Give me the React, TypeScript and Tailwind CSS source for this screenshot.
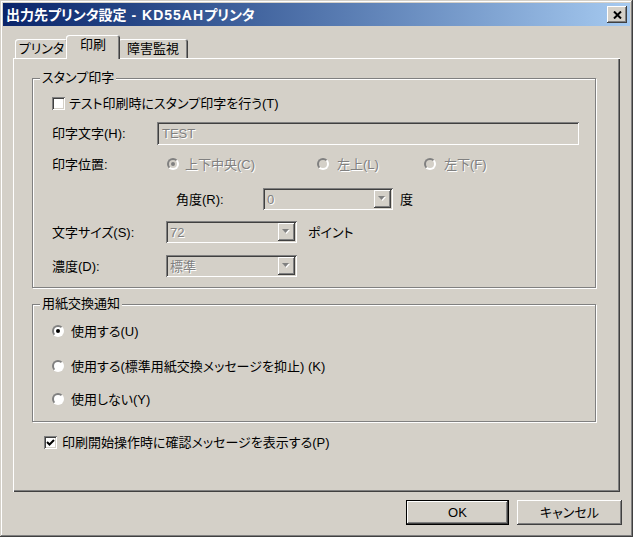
import type { ReactNode } from "react";

const raised =
  "shadow-[inset_-1px_-1px_0_#404040,inset_1px_1px_0_#fff,inset_-2px_-2px_0_#808080,inset_2px_2px_0_#d4d0c8]";
const sunken =
  "shadow-[inset_1px_1px_0_#808080,inset_-1px_-1px_0_#fff,inset_2px_2px_0_#404040,inset_-2px_-2px_0_#d4d0c8]";
const disabledText = "text-[#808080] [text-shadow:1px_1px_0_#fff]";

function Check({ checked }: { checked?: boolean }) {
  return (
    <span className={`flex h-[13px] w-[13px] shrink-0 items-center justify-center bg-white ${sunken}`}>
      {checked && (
        <svg width="13" height="13" viewBox="0 0 13 13">
          <polyline points="3,6 5.5,8.5 10,4" fill="none" stroke="#000" strokeWidth="2" />
        </svg>
      )}
    </span>
  );
}

function Radio({ checked, disabled }: { checked?: boolean; disabled?: boolean }) {
  return (
    <span
      className={`flex h-[12px] w-[12px] shrink-0 items-center justify-center rounded-full border-2 border-t-[#808080] border-l-[#808080] border-r-white border-b-white ${
        disabled ? "bg-[#d4d0c8]" : "bg-white"
      }`}
    >
      {checked && (
        <span className={`h-[4px] w-[4px] rounded-full ${disabled ? "bg-[#808080]" : "bg-black"}`} />
      )}
    </span>
  );
}

function Combo({ value, className }: { value: string; className: string }) {
  return (
    <div className={`flex h-[22px] items-center bg-[#d4d0c8] p-[2px] ${sunken} ${className}`}>
      <span className={`flex-1 pl-[2px] ${disabledText}`}>{value}</span>
      <span className={`flex h-[18px] w-[17px] items-center justify-center bg-[#d4d0c8] ${raised}`}>
        <svg width="9" height="6" viewBox="0 0 9 6">
          <polygon points="1,1 8,1 4.5,5" fill="#fff" />
          <polygon points="0,0 7,0 3.5,4" fill="#808080" />
        </svg>
      </span>
    </div>
  );
}

function Group({ title, className, children }: { title: string; className: string; children: ReactNode }) {
  return (
    <fieldset
      className={`border border-[#808080] px-[7px] shadow-[inset_1px_1px_0_#fff,1px_1px_0_#fff] ${className}`}
    >
      <legend className="bg-[#d4d0c8] px-[2px] leading-[14px]">{title}</legend>
      <div className="flex flex-col pl-[12px]">{children}</div>
    </fieldset>
  );
}

export default function App() {
  return (
    <div className="h-[539px] w-[635px] bg-white text-[13px] leading-none text-black [font-family:'Liberation_Sans','Noto_Sans_CJK_JP',sans-serif] [font-feature-settings:'palt']">
      <div className="flex h-[537px] w-[633px] flex-col bg-[#d4d0c8] p-[3px] shadow-[inset_-1px_-1px_0_#404040,inset_1px_1px_0_#d4d0c8,inset_-2px_-2px_0_#808080,inset_2px_2px_0_#fff]">
        {/* title bar */}
        <div className="flex h-[23px] items-center justify-between bg-gradient-to-r from-[#0a246a] to-[#a6caf0] pl-[3px] pr-[3px]">
          <span className="text-[14px] font-bold text-white">
            出力先プリンタ設定<span className="tracking-[1px]"> - KD55AH</span>プリンタ
          </span>
          <span className={`flex h-[17px] w-[20px] items-center justify-center bg-[#d4d0c8] ${raised}`}>
            <svg width="9" height="8" viewBox="0 0 9 8">
              <path d="M1 0.5 L8 7.5 M8 0.5 L1 7.5" stroke="#000" strokeWidth="2" />
            </svg>
          </span>
        </div>

        {/* tabs */}
        <div className="ml-[10px] mt-[9px] flex h-[23px] items-end pl-[2px]">
          <div className="flex h-[19px] w-[53px] justify-center rounded-t-[3px] pt-[3px] shadow-[inset_1px_1px_0_#fff,inset_-1px_0_0_#404040,inset_-2px_0_0_#808080]">
            プリンタ
          </div>
          <div className="relative z-10 -mx-[2px] -mb-px flex h-[24px] w-[54px] justify-center rounded-t-[3px] bg-[#d4d0c8] pt-[3px] shadow-[inset_1px_1px_0_#fff,inset_-1px_0_0_#404040,inset_-2px_0_0_#808080]">
            印刷
          </div>
          <div className="flex h-[19px] w-[70px] justify-center rounded-t-[3px] pt-[3px] shadow-[inset_1px_1px_0_#fff,inset_-1px_0_0_#404040,inset_-2px_0_0_#808080]">
            障害監視
          </div>
        </div>

        {/* tab page */}
        <div className="ml-[10px] flex h-[434px] w-[607px] flex-col pl-[19px] pr-[24px] shadow-[inset_1px_1px_0_#fff,inset_-1px_-1px_0_#404040,inset_-2px_-2px_0_#808080]">
          <Group title="スタンプ印字" className="mt-[13px] pb-[10px]">
            <div className="mt-[8px] flex h-[20px] items-center">
              <Check />
              <span className="ml-[4px]">テスト印刷時にスタンプ印字を行う(T)</span>
            </div>
            <div className="mt-[9px] flex h-[23px] items-center">
              <span className="w-[105px]">印字文字(H):</span>
              <div className={`flex h-[23px] w-[422px] items-center pl-[5px] ${sunken} ${disabledText}`}>TEST</div>
            </div>
            <div className="mt-[9px] flex h-[20px] items-center">
              <span className="w-[115px]">印字位置:</span>
              <div className="flex w-[150px] items-center">
                <Radio checked disabled />
                <span className={`ml-[6px] ${disabledText}`}>上下中央(C)</span>
              </div>
              <div className="flex w-[107px] items-center">
                <Radio disabled />
                <span className={`ml-[8px] ${disabledText}`}>左上(L)</span>
              </div>
              <div className="flex items-center">
                <Radio disabled />
                <span className={`ml-[8px] ${disabledText}`}>左下(F)</span>
              </div>
            </div>
            <div className="mt-[14px] flex h-[22px] items-center pl-[124px]">
              <span className="w-[87px]">角度(R):</span>
              <Combo value="0" className="w-[130px]" />
              <span className="ml-[7px]">度</span>
            </div>
            <div className="mt-[11px] flex h-[22px] items-center">
              <span className="w-[114px]">文字サイズ(S):</span>
              <Combo value="72" className="w-[131px]" />
              <span className="ml-[11px]">ポイント</span>
            </div>
            <div className="mt-[12px] flex h-[22px] items-center">
              <span className="w-[114px]">濃度(D):</span>
              <Combo value="標準" className="w-[131px]" />
            </div>
          </Group>

          <Group title="用紙交換通知" className="mt-[9px] pb-[12px]">
            <div className="mt-[10px] flex h-[20px] items-center">
              <Radio checked />
              <span className="ml-[7px]">使用する(U)</span>
            </div>
            <div className="mt-[15px] flex h-[20px] items-center">
              <Radio />
              <span className="ml-[7px]">使用する(標準用紙交換メッセージを抑止) (K)</span>
            </div>
            <div className="mt-[13px] flex h-[20px] items-center">
              <Radio />
              <span className="ml-[7px]">使用しない(Y)</span>
            </div>
          </Group>

          <div className="ml-[12px] mt-[10px] flex h-[20px] items-center">
            <Check checked />
            <span className="ml-[5px]">印刷開始操作時に確認メッセージを表示する(P)</span>
          </div>
        </div>

        {/* buttons */}
        <div className="mr-[8px] mt-[8px] flex justify-end gap-[8px]">
          <button className="flex h-[25px] w-[103px] items-center justify-center border border-black bg-[#d4d0c8] shadow-[inset_-1px_-1px_0_#404040,inset_1px_1px_0_#fff,inset_-2px_-2px_0_#808080]">
            OK
          </button>
          <button className={`flex h-[25px] w-[105px] items-center justify-center bg-[#d4d0c8] ${raised}`}>
            キャンセル
          </button>
        </div>
      </div>
    </div>
  );
}
